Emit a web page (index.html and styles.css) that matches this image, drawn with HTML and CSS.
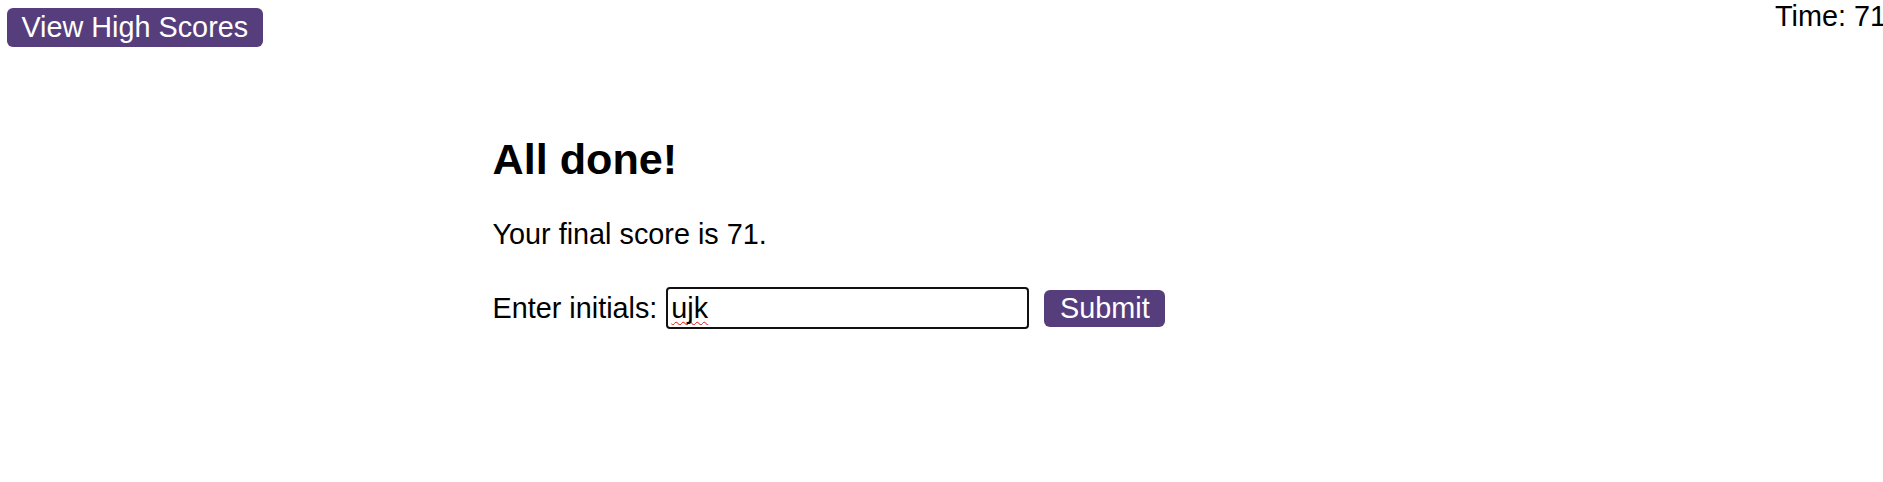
FILE: index.html
```html
<!DOCTYPE html>
<html lang="en">
<head>
<meta charset="utf-8">
<title>Quiz</title>
<link rel="stylesheet" href="styles.css">
</head>
<body>
<header class="top-bar">
  <button class="btn btn-scores" type="button">View High Scores</button>
  <span class="timer">Time: 71</span>
</header>
<main class="quiz">
  <h2 class="quiz-title">All done!</h2>
  <p class="quiz-score">Your final score is 71.</p>
  <form class="initials-form">
    <label class="initials-label" for="initials">Enter initials:</label>
    <input class="initials-input" id="initials" type="text" value="ujk">
    <button class="btn btn-submit" type="button">Submit</button>
  </form>
</main>
</body>
</html>
```
FILE: styles.css
```css
html, body {
  margin: 0;
  padding: 0;
  background: #ffffff;
}

body {
  font-family: "Liberation Sans", Arial, sans-serif;
  font-size: 28.8px;
  color: #000000;
}

.top-bar {
  display: flex;
  justify-content: space-between;
  align-items: flex-start;
}

.btn {
  font-family: "Liberation Sans", Arial, sans-serif;
  font-size: 28.8px;
  line-height: normal;
  color: #ffffff;
  background: #563d7c;
  border: none;
  border-radius: 6px;
  cursor: pointer;
}

.btn-scores {
  margin: 8px 0 0 7px;
  padding: 3px 14.4px;
}

.timer {
  line-height: normal;
  margin-right: -3px;
}

.quiz {
  width: 898px;
  margin: 0 auto;
  padding-top: 50px;
}

.quiz-title {
  font-size: 43.2px;
  font-weight: bold;
  line-height: normal;
  margin: 38px 0 34px 0;
}

.quiz-score {
  margin: 0;
  line-height: normal;
}

.initials-form {
  display: flex;
  align-items: center;
  margin-top: 36px;
}

.initials-label {
  line-height: normal;
}

.initials-input {
  box-sizing: border-box;
  width: 363px;
  height: 42px;
  margin-left: 9px;
  padding: 0 3px;
  font-family: "Liberation Sans", Arial, sans-serif;
  font-size: 28.8px;
  color: #000000;
  border: 2px solid #111111;
  border-radius: 4px;
  outline: none;
  text-decoration: underline wavy #e01010;
  text-decoration-thickness: 1px;
  text-underline-offset: 3px;
  text-decoration-skip-ink: none;
}

.btn-submit {
  margin-left: 15px;
  padding: 2px 15.7px;
}
```
